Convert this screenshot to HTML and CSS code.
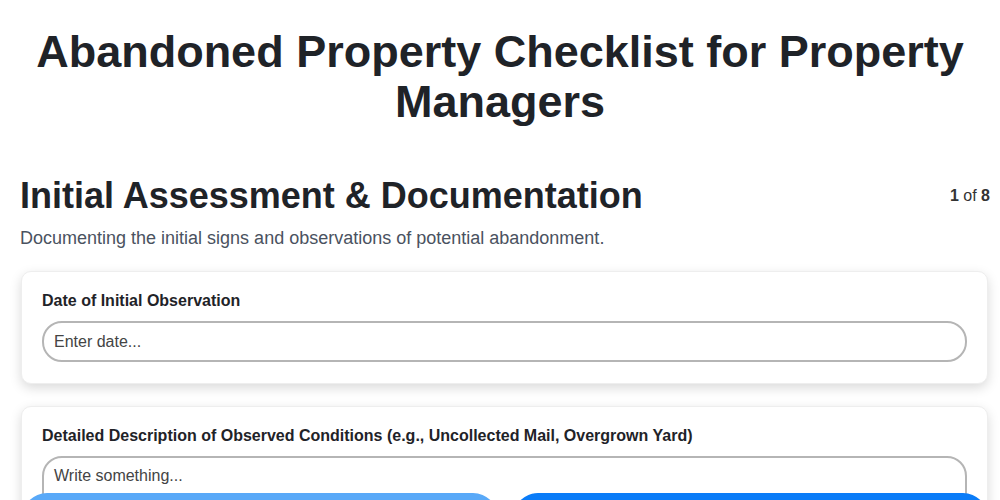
FILE: index.html
```html
<!DOCTYPE html>
<html lang="en">
<head>
    <meta charset="UTF-8">
    <meta name="viewport" content="width=device-width, initial-scale=1.0">
    <title>Abandoned Property Checklist</title>
    <link rel="stylesheet" href="styles.css">
</head>
<body>
    <h1 class="title">Abandoned Property Checklist for Property Managers</h1>

    <div class="step">
        <div class="step-head">
            <h2>Initial Assessment &amp; Documentation</h2>
            <span class="counter"><strong>1</strong> of <strong>8</strong></span>
        </div>
        <p class="step-desc">Documenting the initial signs and observations of potential abandonment.</p>

        <!-- Date -->
        <div class="card">
            <label class="field-label" for="obs_date">Date of Initial Observation</label>
            <input id="obs_date" class="field" type="text" placeholder="Enter date...">
        </div>

        <!-- Conditions -->
        <div class="card">
            <label class="field-label" for="obs_desc">Detailed Description of Observed Conditions (e.g., Uncollected Mail, Overgrown Yard)</label>
            <textarea id="obs_desc" class="field area" placeholder="Write something..."></textarea>
        </div>
    </div>

    <div class="nav">
        <button class="btn btn-prev" disabled>Previous</button>
        <button class="btn btn-next">Next</button>
    </div>
</body>
</html>
```

FILE: styles.css
```css
body {
    font-family: "Liberation Sans", Arial, sans-serif;
    background-color: #fff;
    color: #1f2328;
    margin: 0;
    padding: 0 10px 80px 20px;
}

.title {
    font-size: 45px;
    line-height: 50px;
    text-align: center;
    margin: 27px 0 0;
    padding: 0 10px 0 0;
}

.step {
    margin-top: 47px;
}

.step-head {
    display: flex;
    justify-content: space-between;
    align-items: center;
}

.step-head h2 {
    font-size: 36px;
    line-height: 44px;
    margin: 0;
}

.counter {
    font-size: 16px;
    color: #333;
}

.step-desc {
    font-size: 18px;
    color: #4a5260;
    margin: 10px 0 22px;
}

.card {
    background: #fff;
    border: 1px solid #eee;
    border-radius: 10px;
    padding: 20px 20px 21px;
    margin: 0 2px 22px 1px;
    box-shadow: 0 4px 12px rgba(0, 0, 0, 0.15);
}

.field-label {
    display: block;
    font-size: 16px;
    font-weight: bold;
    margin: 0 0 11px;
}

.field {
    display: block;
    box-sizing: border-box;
    width: 100%;
    height: 41px;
    padding: 0 10px;
    font-family: inherit;
    font-size: 16px;
    color: #333;
    border: 2px solid #b5b5b5;
    border-radius: 20px;
    outline: none;
}

.field::placeholder {
    color: #444;
}

.area {
    height: 100px;
    padding-top: 9px;
    resize: none;
}

/* bottom navigation bar sits over the page */
.nav {
    position: fixed;
    left: 22px;
    right: 12px;
    bottom: -43px;
    display: flex;
    gap: 15px;
}

.btn {
    flex: 1;
    height: 50px;
    border: none;
    border-radius: 25px;
    color: #fff;
    font-size: 16px;
    cursor: pointer;
}

.btn-prev {
    background: #59a9f8;
}

.btn-next {
    background: #0a7cf8;
}
```
